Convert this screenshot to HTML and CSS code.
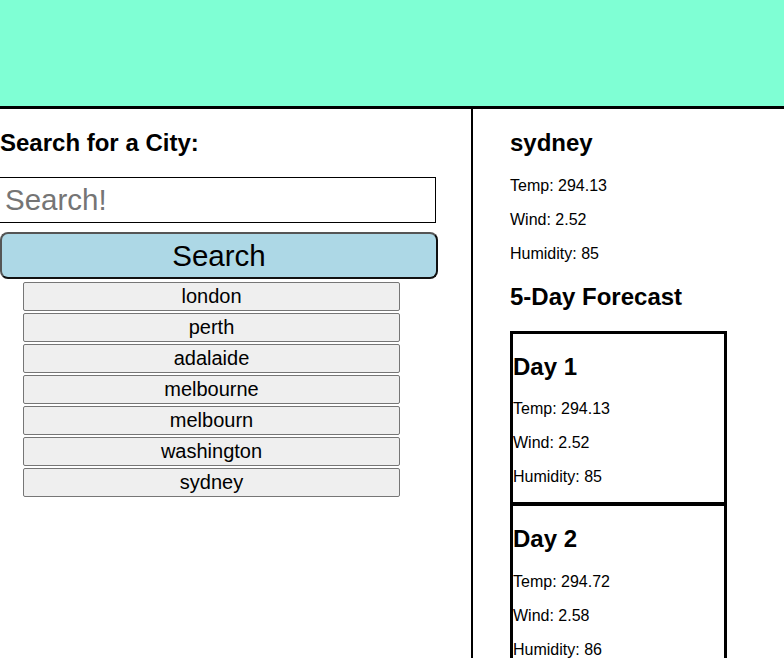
FILE: index.html
```html
<!DOCTYPE html>
<html>
<head>
<meta charset="utf-8">
<title>Weather Dashboard</title>
<link rel="stylesheet" href="styles.css">
</head>
<body>
<header class="top"></header>
<main class="main">
  <section class="search-col">
    <h2 class="title">Search for a City:</h2>
    <input class="search-input" type="text" placeholder="Search!">
    <button class="search-btn">Search</button>
    <div class="history">
      <button class="city">london</button>
      <button class="city">perth</button>
      <button class="city">adalaide</button>
      <button class="city">melbourne</button>
      <button class="city">melbourn</button>
      <button class="city">washington</button>
      <button class="city">sydney</button>
    </div>
  </section>
  <section class="weather-col">
    <h2 class="title">sydney</h2>
    <p class="stat">Temp: 294.13</p>
    <p class="stat">Wind: 2.52</p>
    <p class="stat">Humidity: 85</p>
    <h2 class="title">5-Day Forecast</h2>
    <div class="forecast">
      <div class="card">
        <h2 class="card-title">Day 1</h2>
        <p class="stat">Temp: 294.13</p>
        <p class="stat">Wind: 2.52</p>
        <p class="stat">Humidity: 85</p>
      </div>
      <div class="card">
        <h2 class="card-title">Day 2</h2>
        <p class="stat">Temp: 294.72</p>
        <p class="stat">Wind: 2.58</p>
        <p class="stat">Humidity: 86</p>
      </div>
      <div class="card">
        <h2 class="card-title">Day 3</h2>
        <p class="stat">Temp: 294.51</p>
        <p class="stat">Wind: 2.61</p>
        <p class="stat">Humidity: 84</p>
      </div>
    </div>
  </section>
</main>
</body>
</html>
```
FILE: styles.css
```css
html, body {
  margin: 0;
  padding: 0;
  background: #fff;
  font-family: "Liberation Sans", Arial, sans-serif;
  color: #000;
}

.top {
  height: 106px;
  background: #7fffd4;
  border-bottom: 3px solid #000;
}

.main {
  display: flex;
  align-items: stretch;
}

.search-col {
  width: 471px;
  border-right: 2px solid #000;
  flex: none;
}

.title {
  font-size: 24px;
  font-weight: bold;
  margin: 19.92px 0;
}

.search-input {
  display: block;
  box-sizing: border-box;
  width: 436px;
  height: 46px;
  margin: 0;
  border: 1px solid #000;
  border-left: 0;
  padding: 0 5px;
  font-family: "Liberation Sans", Arial, sans-serif;
  font-size: 29.5px;
  color: #000;
  outline: none;
}

.search-input::placeholder {
  color: #757575;
}

.search-btn {
  display: block;
  box-sizing: border-box;
  width: 438px;
  height: 47px;
  margin: 9px 0 0 0;
  padding: 2px 0 0 0;
  background: #add8e6;
  border: 2px solid;
  border-color: #555 #111 #111 #555;
  border-radius: 8px;
  font-family: "Liberation Sans", Arial, sans-serif;
  font-size: 29.5px;
  color: #000;
}

.history {
  display: flex;
  flex-direction: column;
  gap: 2px;
  width: 377px;
  margin: 3px 0 0 23px;
}

.city {
  box-sizing: border-box;
  height: 29px;
  margin: 0;
  padding: 0 6px;
  background: #efefef;
  border: 1px solid #767676;
  border-radius: 2px;
  font-family: "Liberation Sans", Arial, sans-serif;
  font-size: 20px;
  color: #000;
}

.weather-col {
  padding-left: 37px;
  flex: 1;
}

.stat {
  font-size: 16px;
  margin: 16px 0;
}

.forecast {
  width: 217px;
}

.card {
  border: 3px solid #000;
}

.card + .card {
  border-top-width: 1px;
}

.card-title {
  font-size: 24px;
  font-weight: bold;
  margin: 19px 0 19.5px 0;
}
```
